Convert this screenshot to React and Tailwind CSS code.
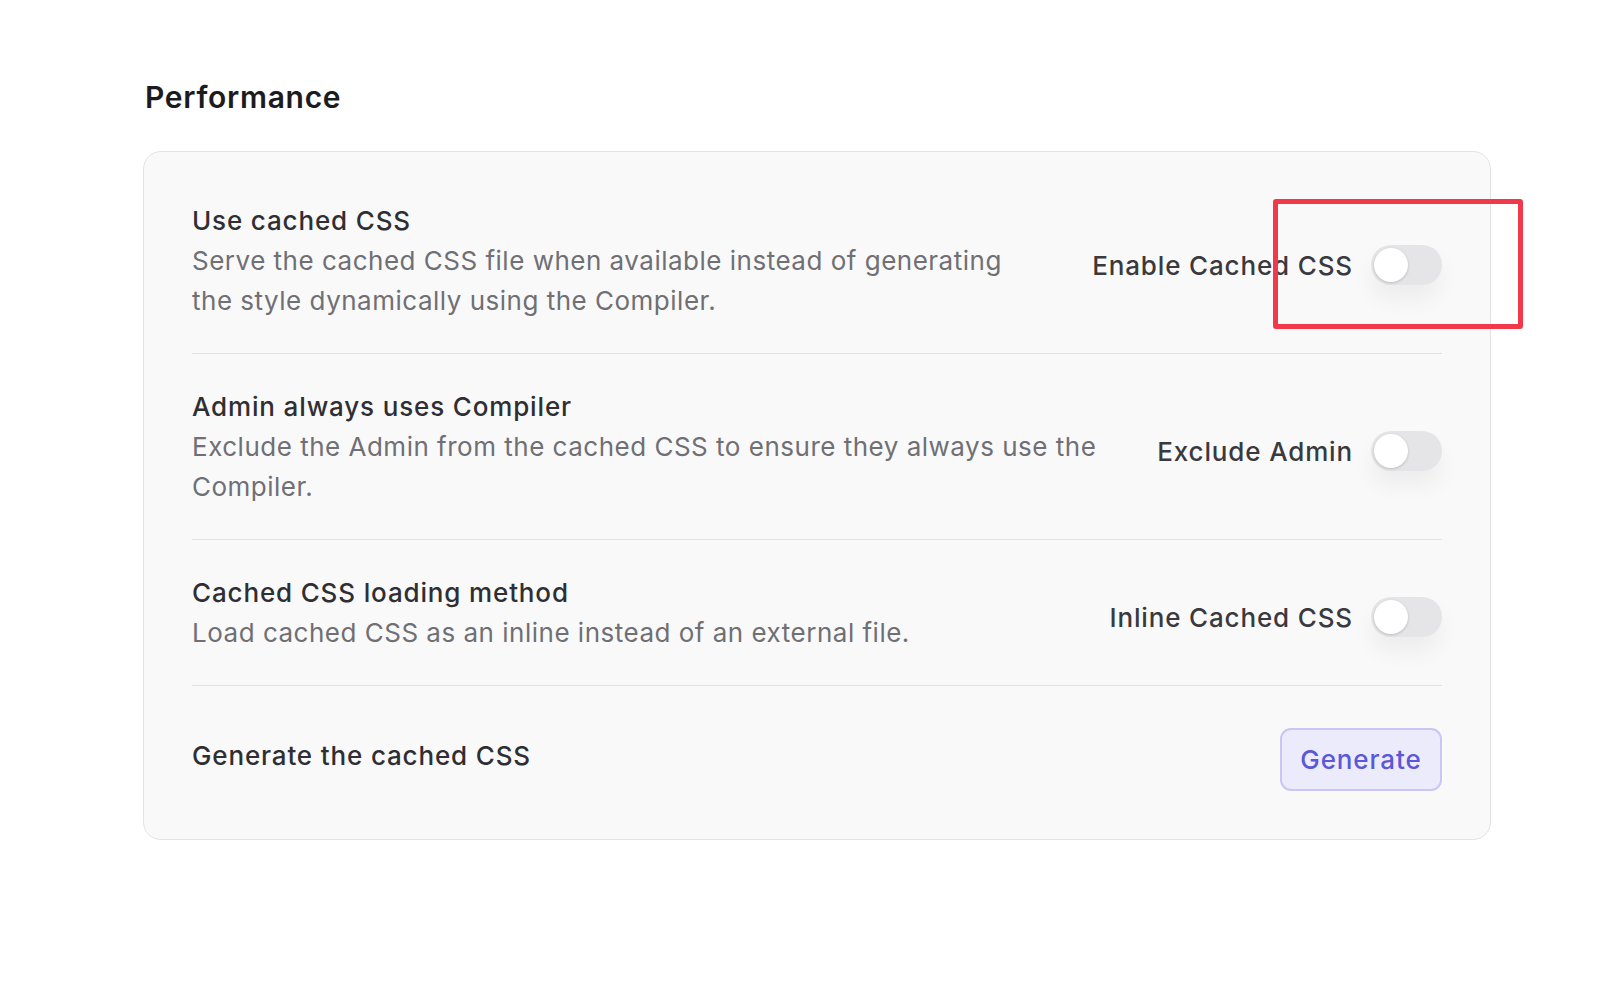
const rows = [
  {
    title: "Use cached CSS",
    desc: "Serve the cached CSS file when available instead of generating the style dynamically using the Compiler.",
    label: "Enable Cached CSS",
  },
  {
    title: "Admin always uses Compiler",
    desc: "Exclude the Admin from the cached CSS to ensure they always use the Compiler.",
    label: "Exclude Admin",
  },
  {
    title: "Cached CSS loading method",
    desc: "Load cached CSS as an inline instead of an external file.",
    label: "Inline Cached CSS",
  },
];

function Toggle() {
  return (
    <span className="flex h-10 w-[71px] shrink-0 items-center rounded-full bg-[#e5e5e8] p-[3px] shadow-[0_14px_22px_rgba(0,0,0,0.05)]">
      <span className="h-[34px] w-[34px] rounded-full bg-white shadow-[0_1px_3px_rgba(0,0,0,0.18)]" />
    </span>
  );
}

export default function App() {
  return (
    <div
      className="relative min-h-[1000px] bg-white px-[143px] pt-[79px]"
      style={{ fontFamily: "Inter, 'Noto Sans', sans-serif" }}
    >
      <h2 className="ml-[2px] text-[30px] font-semibold leading-9 tracking-[0.7px] text-[#1c1c1e]">
        Performance
      </h2>

      <div className="mt-[36px] w-[1348px] rounded-[18px] border border-[#e3e3e5] bg-[#f9f9fa] px-12">
        {rows.map((r, i) => (
          <div
            key={r.title}
            className={`flex items-center gap-12 border-b border-[#e2e2e4] pb-8 ${i === 0 ? "pt-[49px]" : "pt-[33px]"}`}
          >
            <div className="flex-1 text-[26px] leading-10">
              <div className="font-medium tracking-[0.85px] text-[#2f2f33]">{r.title}</div>
              <p className="tracking-[0.5px] text-[#6f6f74]">{r.desc}</p>
            </div>
            <div className="mt-2 flex items-center gap-[18px]">
              <span className="text-[26px] font-medium tracking-[0.85px] text-[#3a3a3e]">{r.label}</span>
              <Toggle />
            </div>
          </div>
        ))}

        <div className="flex items-center justify-between pt-[42px] pb-12">
          <div className="-mt-2 text-[26px] font-medium leading-10 tracking-[0.85px] text-[#2f2f33]">
            Generate the cached CSS
          </div>
          <button className="h-[63px] w-[162px] rounded-[11px] border-2 border-[#c9c6f6] bg-[#ebebfb] text-[26px] font-medium tracking-[0.9px] text-[#5a57d9]">
            Generate
          </button>
        </div>
      </div>

      <div className="pointer-events-none absolute left-[1273px] top-[199px] h-[130px] w-[250px] rounded-[3px] border-[5px] border-[#f2394a]" />
    </div>
  );
}
